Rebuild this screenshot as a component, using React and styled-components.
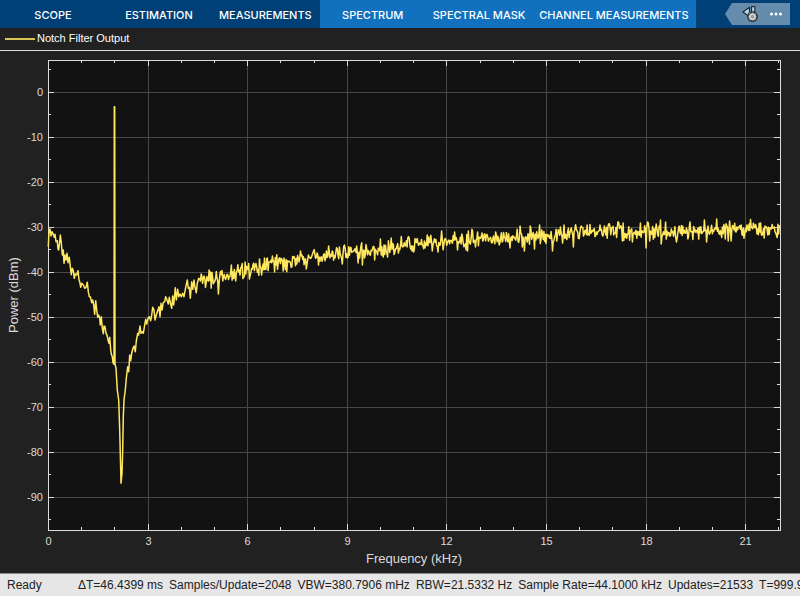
import React, { useState } from 'react';
import styled, { createGlobalStyle } from 'styled-components';

const GlobalStyle = createGlobalStyle`
  * {
    box-sizing: border-box;
  }

  body {
    margin: 0;
    background-color: #212121;
    font-family: 'Liberation Sans', Arial, sans-serif;
  }
`;

const SCOPE_TABS = ['SCOPE', 'ESTIMATION', 'MEASUREMENTS'];
const SPECTRUM_TABS = ['SPECTRUM', 'SPECTRAL MASK', 'CHANNEL MEASUREMENTS'];

const STATUS = [
  'ΔT=46.4399 ms',
  'Samples/Update=2048',
  'VBW=380.7906 mHz',
  'RBW=21.5332 Hz',
  'Sample Rate=44.1000 kHz',
  'Updates=21533',
  'T=999.9',
];

// Chart geometry, in viewBox units
const CHART = { width: 800, height: 522 };
const PLOT = { left: 48, right: 780, top: 9, bottom: 479 };
const ZERO_DBM = 41;
const PX_PER_DB = 4.5;
const PX_PER_KHZ = 33.2;

const toX = (khz) => Math.round(PLOT.left + khz * PX_PER_KHZ) + 0.5;
const toY = (dbm) => Math.floor(ZERO_DBM - dbm * PX_PER_DB) + 0.5;

const range = (from, to, step) => {
  const out = [];
  for (let v = from; v <= to; v += step) out.push(v);
  return out;
};

const X_TICKS = range(0, 22, 1);
const Y_TICKS = range(-95, 5, 5);

// Notch part of the trace, three steps to one chart unit
const NOTCH = [
  [145, -13], [147, -58], [150, -66], [153, -45], [156, -58], [160, -50], [163, -41], [165, -50],
  [168, -28], [172, -31], [174, -5], [176, -3], [179, -28], [181, -48], [184, -25], [187, 12],
  [190, -3], [192, 37], [195, 12], [198, 27], [201, 7], [204, 35], [208, 19], [211, 47],
  [214, 71], [217, 52], [220, 59], [223, 82], [226, 69], [230, 72], [234, 59], [237, 87],
  [239, 92], [242, 109], [245, 97], [250, 102], [254, 112], [258, 109], [262, 94], [265, 122],
  [268, 137], [271, 137], [275, 155], [278, 147], [281, 162], [284, 190], [287, 149], [290, 177],
  [293, 199], [296, 192], [299, 202], [301, 222], [304, 197], [307, 232], [310, 248], [312, 225],
  [315, 227], [318, 247], [321, 252], [324, 267], [327, 277], [329, 259], [332, 297], [334, 309],
  [337, 317], [339, 335], [342, 340], [343, -433], [344, -433], [345, 340], [348, 352], [352, 417],
  [356, 447], [359, 537], [361, 607], [363, 697], [366, 667], [368, 597], [370, 497], [372, 447],
  [376, 417], [379, 382], [383, 347], [386, 362], [389, 312], [392, 329], [395, 307], [399, 292],
  [402, 285], [406, 302], [409, 270], [413, 247], [416, 252], [420, 225], [423, 247], [427, 242],
  [430, 247], [434, 222], [437, 205], [440, 219], [444, 202], [448, 197], [452, 209], [455, 192],
  [458, 169], [462, 177], [465, 207], [469, 192], [473, 179], [477, 167], [480, 197], [483, 157],
  [486, 177], [490, 155], [494, 152], [497, 137], [501, 147], [505, 159], [508, 139], [511, 155],
  [515, 172], [518, 135], [521, 162], [526, 110], [529, 147], [533, 115], [536, 137], [540, 129],
  [544, 137], [548, 127], [552, 137], [556, 115], [560, 95], [562, 87], [565, 112], [568, 109],
  [571, 142], [575, 92], [578, 115], [582, 87], [585, 109], [589, 125], [592, 97], [596, 82],
];

// Mean level of the noisy part and the peaks that stand out of it
const TREND = [
  [199, 232], [210, 229], [220, 226], [230, 222], [247, 218], [270, 213], [290, 210], [320, 206],
  [347, 202], [370, 200], [400, 195], [420, 193], [450, 191], [480, 188], [500, 187], [540, 184],
  [570, 183], [600, 181], [660, 181], [720, 180], [780, 179],
];

const PEAKS = [
  [201, 223], [210, 221], [218, 243], [231, 214], [235, 230], [245, 211], [249, 228], [259, 208],
  [261, 224], [272, 205], [274, 221], [283, 220], [300, 200], [306, 218], [318, 214], [328, 195],
  [342, 213], [344, 194], [356, 195], [362, 214], [374, 209], [380, 188], [383, 206], [391, 187],
  [409, 187], [427, 184], [432, 200], [438, 201], [441, 180], [454, 181], [457, 199], [466, 199],
  [468, 180], [495, 181], [510, 197], [520, 175], [522, 196], [524, 200], [530, 175], [534, 198],
  [539, 174], [552, 200], [560, 176], [564, 174], [571, 177], [573, 196], [587, 174], [608, 173],
  [622, 190], [623, 172], [632, 191], [640, 172], [646, 197], [660, 169], [661, 193], [665, 171],
  [676, 191], [690, 171], [704, 169], [706, 191], [716, 168], [728, 190], [729, 170], [731, 190],
  [741, 174], [749, 173], [760, 172], [764, 187],
];

const trendAt = (x) => {
  const i = Math.max(1, TREND.findIndex((p) => p[0] >= x));
  const [x0, y0] = TREND[i - 1];
  const [x1, y1] = TREND[i];
  return y0 + ((y1 - y0) * (x - x0)) / (x1 - x0);
};

const buildTrace = () => {
  const points = NOTCH.map(([x, y]) => [x / 3, y / 3 + 200]);
  let seed = 21533;
  const random = () => {
    seed = (seed * 16807) % 2147483647;
    return seed / 2147483647;
  };
  let next = 0;
  for (let x = 199; x <= 780; x += 0.72) {
    const noise = (random() + random() + random() - 1.5) * 8;
    if (next < PEAKS.length && x >= PEAKS[next][0]) {
      points.push([x, PEAKS[next][1]]);
      next += 1;
    } else {
      points.push([x, trendAt(x) + noise]);
    }
  }
  return points.map(([x, y]) => `${x.toFixed(1)},${y.toFixed(1)}`).join(' ');
};

const TRACE = buildTrace();

const Window = styled.div`
  display: flex;
  flex-direction: column;
  min-height: 100vh;
  overflow: hidden;
`;

const Toolstrip = styled.nav`
  display: flex;
  align-items: center;
  height: 28px;
  padding-right: 10px;
  background-color: #004076;
`;

const TabGroup = styled.div`
  display: flex;
  align-self: stretch;
  padding-right: 1px;
  background-color: ${(props) => (props.$contextual ? '#1171be' : 'transparent')};
`;

const Tab = styled.button`
  min-width: 106px;
  padding: 2px 7px 0;
  border: none;
  background: none;
  color: #fff;
  font-family: Inter, sans-serif;
  font-size: 11px;
  font-weight: 500;
  white-space: nowrap;
  cursor: pointer;
`;

const QuickAccess = styled.div`
  display: flex;
  align-items: center;
  gap: 10px;
  height: 22px;
  margin-left: auto;
  padding: 0 7px 0 16px;
  background-color: #668cad;
  clip-path: polygon(0 50%, 7px 0, 100% 0, 100% 100%, 7px 100%);
`;

const IconButton = styled.button`
  display: flex;
  padding: 0;
  border: none;
  background: none;
  cursor: pointer;
`;

const Legend = styled.div`
  display: flex;
  align-items: center;
  gap: 2px;
  height: 23px;
  padding: 0 5px 2px;
  border-bottom: 1px solid #dcdcdc;
  color: #fff;
  font-size: 11px;
`;

const LegendLine = styled.span`
  width: 30px;
  height: 2px;
  margin-top: 2px;
  background-color: #d8c452;
`;

const ChartArea = styled.main`
  flex: 1;
`;

const Chart = styled.svg`
  display: block;
  width: 100%;
  height: auto;
`;

const TickLabel = styled.text`
  fill: #dcdcdc;
  font-size: 11px;
`;

const AxisTitle = styled.text`
  fill: #dcdcdc;
  font-size: 13px;
  text-anchor: middle;
`;

const StatusBar = styled.footer`
  display: flex;
  align-items: center;
  height: 23px;
  padding-left: 7px;
  border-top: 1px solid #8a8a8a;
  background-color: #e6e6e6;
  color: #212121;
  font-size: 12px;
  white-space: nowrap;
  overflow: hidden;
`;

const StatusState = styled.span`
  flex: 0 0 71px;
`;

const StatusItems = styled.div`
  display: flex;
  gap: 6px;
`;

const SettingsIcon = () => (
  <svg width="18" height="18" viewBox="0 0 18 18">
    <path d="M8.5 2.2v9.2L2 7z" fill="#b9dcf7" stroke="#1e2a35" strokeWidth="1.2" strokeLinejoin="round" />
    <rect x="10.6" y="1.6" width="3.2" height="8" fill="#b9dcf7" stroke="#1e2a35" strokeWidth="1.2" />
    <g fill="#d5d5d5" stroke="#333" strokeWidth="1">
      {range(0, 315, 45).map((angle) => (
        <rect key={angle} x="10.4" y="6.7" width="2.2" height="3" transform={`rotate(${angle} 11.5 11.7)`} />
      ))}
      <circle cx="11.5" cy="11.7" r="3.7" />
    </g>
    <circle cx="11.5" cy="11.7" r="3.4" fill="#d5d5d5" />
    <circle cx="11.5" cy="11.7" r="1.2" fill="#aaa" stroke="#777" strokeWidth="0.8" />
  </svg>
);

const MoreIcon = () => (
  <svg width="14" height="14" viewBox="0 0 14 14" fill="#fff">
    <circle cx="2.5" cy="7" r="1.5" />
    <circle cx="7" cy="7" r="1.5" />
    <circle cx="11.5" cy="7" r="1.5" />
  </svg>
);

const SpectrumChart = () => {
  const { left, right, top, bottom } = PLOT;

  return (
    <Chart viewBox={`0 0 ${CHART.width} ${CHART.height}`} role="img" aria-label="Power spectrum">
      <rect x={left} y={top} width={right - left} height={bottom - top} fill="#121212" />

      <g stroke="#474747">
        {X_TICKS.filter((t) => t % 3 === 0).map((t) => (
          <line key={t} x1={toX(t)} x2={toX(t)} y1={top} y2={bottom} />
        ))}
        {Y_TICKS.filter((t) => t % 10 === 0).map((t) => (
          <line key={t} x1={left} x2={right} y1={toY(t)} y2={toY(t)} />
        ))}
      </g>

      <g stroke="#dcdcdc" fill="none">
        <rect x={left + 0.5} y={top + 0.5} width={right - left} height={bottom - top} />
        {X_TICKS.map((t) => {
          const size = t % 3 === 0 ? 6 : 3;
          return (
            <path key={t} d={`M${toX(t)} ${top}v${size}M${toX(t)} ${bottom}v-${size}`} />
          );
        })}
        {Y_TICKS.map((t) => {
          const size = t % 10 === 0 ? 6 : 3;
          return (
            <path key={t} d={`M${left} ${toY(t)}h${size}M${right} ${toY(t)}h-${size}`} />
          );
        })}
      </g>

      <polyline points={TRACE} fill="none" stroke="#ffe75f" strokeWidth="1.5" strokeLinejoin="round" />

      {X_TICKS.filter((t) => t % 3 === 0).map((t) => (
        <TickLabel key={t} x={toX(t)} y={494} textAnchor="middle">{t}</TickLabel>
      ))}
      {Y_TICKS.filter((t) => t % 10 === 0).map((t) => (
        <TickLabel key={t} x={43} y={toY(t) + 3.5} textAnchor="end">{t}</TickLabel>
      ))}

      <AxisTitle x={414} y={512}>Frequency (kHz)</AxisTitle>
      <AxisTitle transform="translate(18 244) rotate(-90)">Power (dBm)</AxisTitle>
    </Chart>
  );
};

const App = () => {
  const [active, setActive] = useState('SCOPE');

  const renderTab = (name) => (
    <Tab key={name} type="button" aria-pressed={active === name} onClick={() => setActive(name)}>
      {name}
    </Tab>
  );

  return (
    <Window>
      <GlobalStyle />
      <Toolstrip>
        <TabGroup>{SCOPE_TABS.map(renderTab)}</TabGroup>
        <TabGroup $contextual>{SPECTRUM_TABS.map(renderTab)}</TabGroup>
        <QuickAccess>
          <IconButton type="button" aria-label="Settings">
            <SettingsIcon />
          </IconButton>
          <IconButton type="button" aria-label="More">
            <MoreIcon />
          </IconButton>
        </QuickAccess>
      </Toolstrip>
      <Legend>
        <LegendLine />
        Notch Filter Output
      </Legend>
      <ChartArea>
        <SpectrumChart />
      </ChartArea>
      <StatusBar>
        <StatusState>Ready</StatusState>
        <StatusItems>
          {STATUS.map((item) => (
            <span key={item}>{item}</span>
          ))}
        </StatusItems>
      </StatusBar>
    </Window>
  );
};

export default App;
